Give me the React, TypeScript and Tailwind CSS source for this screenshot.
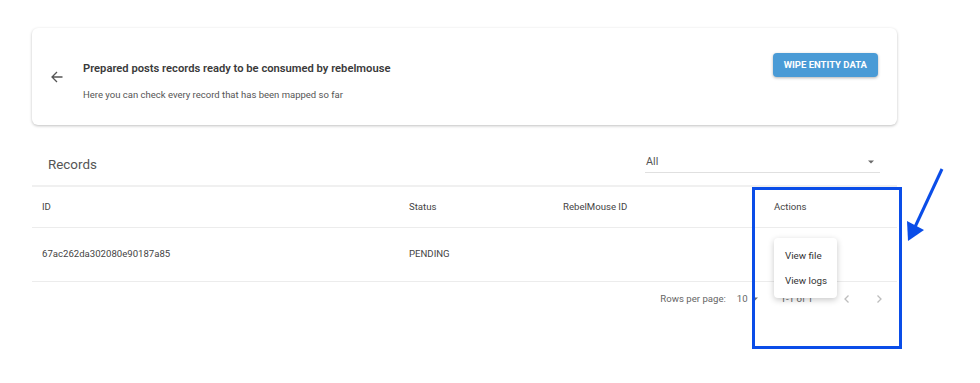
import React from "react";

const font = {fontFamily: "Roboto, 'Liberation Sans', sans-serif"};

function Caret() {
    return (
        <svg width="10" height="10" viewBox="0 0 10 10">
            <path d="M2 3.5h6L5 6.5z" fill="#6b6b6b" />
        </svg>
    );
}

function Chevron({dir}: {dir: "left" | "right"}) {
    return (
        <svg width="12" height="12" viewBox="0 0 12 12" fill="none">
            <path
                d={dir === "left" ? "M7.5 2.5L4 6l3.5 3.5" : "M4.5 2.5L8 6l-3.5 3.5"}
                stroke="#bdbdbd"
                strokeWidth="1.3"
            />
        </svg>
    );
}

export default function App() {
    return (
        <div className="relative h-[383px] w-[980px] overflow-hidden bg-white" style={font}>
            <div className="ml-[32px] w-[865px] pt-[28px]">
                {/* header card */}
                <div className="flex h-[97px] items-start rounded-md bg-white shadow-[0_1px_3px_rgba(0,0,0,0.25)]">
                    <div className="flex h-full items-center pl-[18px] pr-[19px]">
                        <svg width="14" height="14" viewBox="0 0 14 14" fill="none">
                            <path d="M12.5 7H2M7 2L2 7l5 5" stroke="#555" strokeWidth="1.3" />
                        </svg>
                    </div>
                    <div className="flex flex-1 flex-col pt-[34px]">
                        <div className="text-[11.2px] font-semibold leading-[14px] text-[#3a3a3a]">
                            Prepared posts records ready to be consumed by rebelmouse
                        </div>
                        <div className="mt-[13px] text-[9.5px] leading-[12px] text-[#555]">
                            Here you can check every record that has been mapped so far
                        </div>
                    </div>
                    <div className="pr-[19px] pt-[23px]">
                        <button className="h-[24px] rounded-[4px] bg-[#4a9bd6] px-[11px] text-[9.5px] font-bold uppercase text-white shadow-[0_1px_3px_rgba(0,0,0,0.3)]">
                            Wipe entity data
                        </button>
                    </div>
                </div>

                {/* records toolbar */}
                <div className="flex h-[60px] items-end justify-between pb-[12px]">
                    <div className="pl-[16px] text-[13.4px] leading-[16px] text-[#555]">Records</div>
                    <div className="mr-[17px] flex w-[235px] items-center justify-between border-b border-[#e0e0e0] pb-[3px] pl-[1px] pr-[4px]">
                        <span className="text-[10.8px] leading-[14px] text-[#555]">All</span>
                        <Caret />
                    </div>
                </div>

                {/* table */}
                <div className="border-t-2 border-[#f0f0f0]">
                    <div className="grid h-[41px] grid-cols-[367px_154px_211px_133px] items-center border-b border-[#ececec] text-[9.6px] text-[#444]">
                        <div className="pl-[10px]">ID</div>
                        <div className="pl-[10px]">Status</div>
                        <div className="pl-[10px]">RebelMouse ID</div>
                        <div className="pl-[10px]">Actions</div>
                    </div>
                    <div className="grid h-[54px] grid-cols-[367px_154px_211px_133px] items-center border-b border-[#ececec] text-[9.6px] text-[#444]">
                        <div className="pl-[10px]">67ac262da302080e90187a85</div>
                        <div className="pl-[10px]">PENDING</div>
                        <div className="pl-[10px]"></div>
                        <div className="pl-[10px]"></div>
                    </div>
                    <div className="flex h-[34px] items-center justify-end pr-[12px] text-[9.6px] text-[#666]">
                        <span>Rows per page:</span>
                        <span className="ml-[11px] flex items-center gap-[2px]">
                            10 <Caret />
                        </span>
                        <span className="ml-[21px]">1-1 of 1</span>
                        <span className="ml-[28px]">
                            <Chevron dir="left" />
                        </span>
                        <span className="ml-[20px]">
                            <Chevron dir="right" />
                        </span>
                    </div>
                </div>
            </div>

            {/* action menu */}
            <div className="absolute left-[774px] top-[238px] flex w-[63px] flex-col whitespace-nowrap rounded-[4px] bg-white py-[5px] text-[9.8px] text-[#333] shadow-[0_2px_6px_rgba(0,0,0,0.22)]">
                <div className="px-[11px] py-[6px] leading-[13px]">View file</div>
                <div className="px-[11px] py-[6px] leading-[13px]">View logs</div>
            </div>

            {/* annotation */}
            <div className="pointer-events-none absolute left-[752px] top-[187px] h-[162px] w-[150px] border-[3px] border-[#0a4de8]" />
            <svg className="pointer-events-none absolute left-0 top-0" width="980" height="383">
                <line x1="942" y1="169" x2="915" y2="227" stroke="#0a4de8" strokeWidth="3" />
                <polygon points="908,241 907,221 924,230" fill="#0a4de8" />
            </svg>
        </div>
    );
}
